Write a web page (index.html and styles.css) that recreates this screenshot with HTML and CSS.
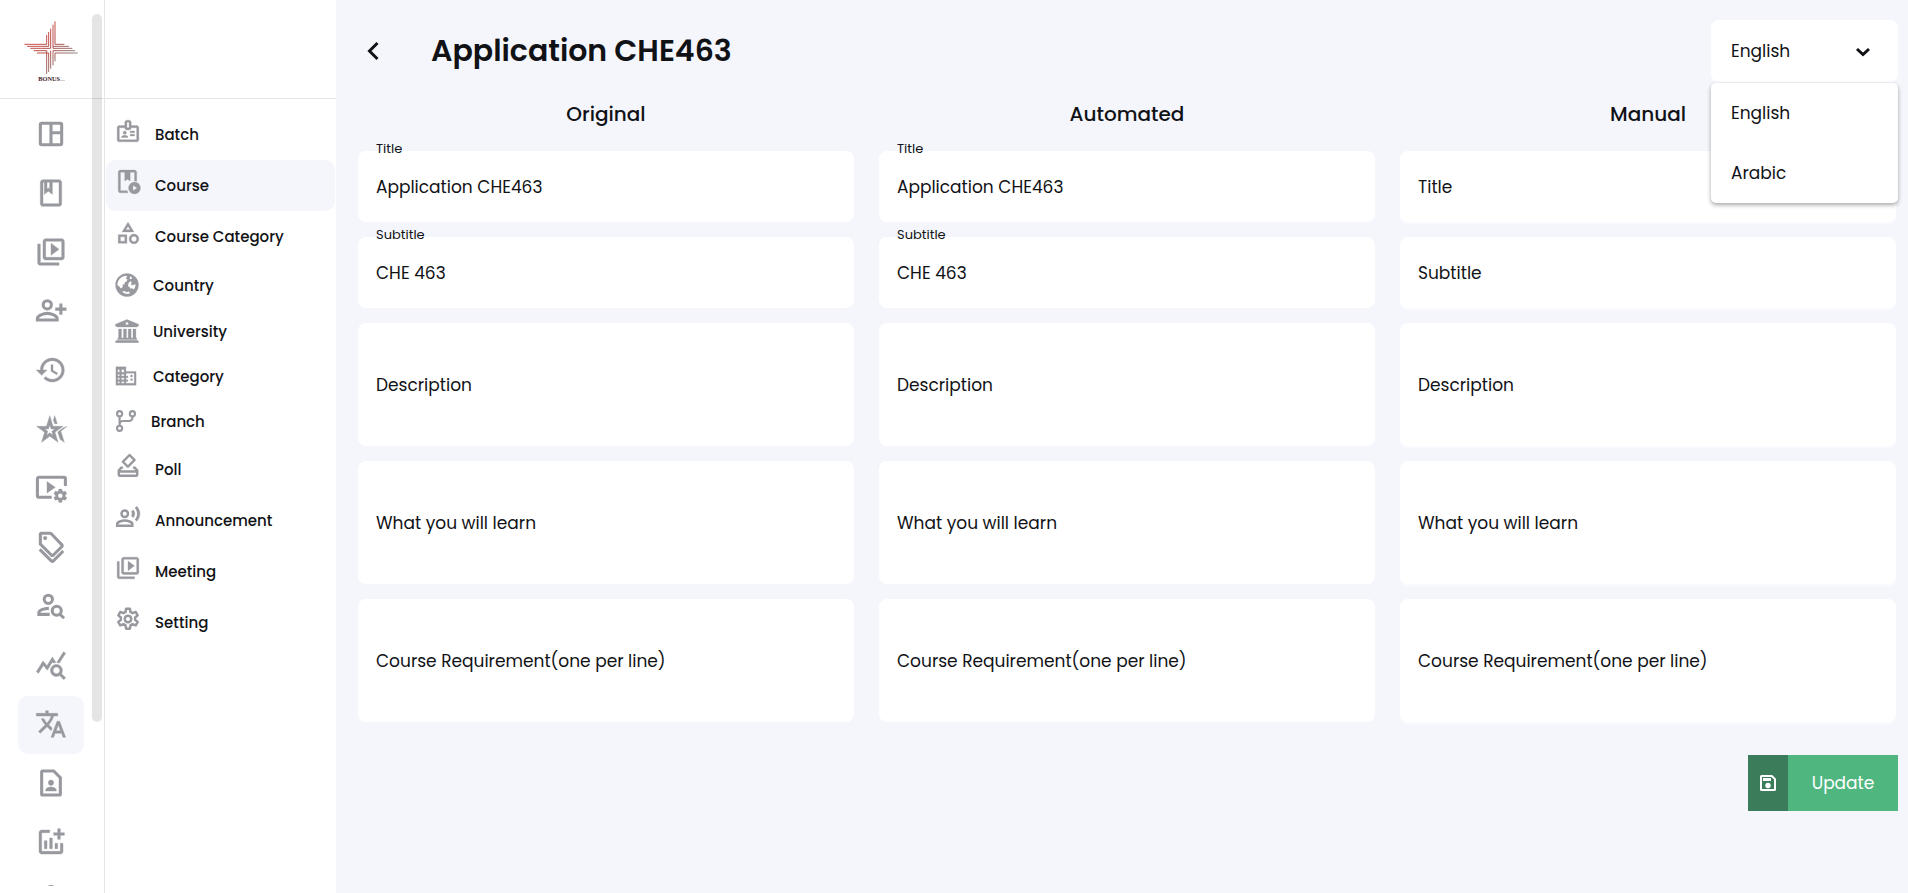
FILE: index.html
```html
<!DOCTYPE html>
<html lang="en">
<head>
    <meta charset="UTF-8">
    <meta name="viewport" content="width=device-width, initial-scale=1.0">
    <title>Application CHE463</title>
    <link rel="stylesheet" href="styles.css">
</head>
<body>
    <!-- Icon rail -->
    <aside class="rail">
        <a href="#" class="logo" aria-label="Bonus">
            <svg width="56" height="64" viewBox="0 0 168 192">
                <defs>
                    <linearGradient id="logoRed" gradientUnits="userSpaceOnUse" x1="20" y1="20" x2="140" y2="130">
                        <stop offset="0" stop-color="#e0524e"/>
                        <stop offset="0.55" stop-color="#b54f4a"/>
                        <stop offset="1" stop-color="#8d8583"/>
                    </linearGradient>
                </defs>
                <g fill="none" stroke="url(#logoRed)" stroke-width="3">
                    <path d="M71 51V79H4M77 42V85H12M83 32V91H22"/>
                    <path d="M90 20V91H148M96 10V79H124M90 85H138"/>
                    <path d="M71 168V98H32M77 162V105H42M83 152V98"/>
                    <path d="M90 142V98H156M96 130V105H164"/>
                </g>
                <text class="logo-text" x="46" y="189">BONUS<tspan class="logo-dots">...</tspan></text>
            </svg>
        </a>
        <nav class="rail-nav" aria-label="Main">
            <a href="#" class="rail-link" aria-label="Dashboard">
                <svg viewBox="0 0 24 24"><path class="line" d="M5 4h14a1 1 0 0 1 1 1v14a1 1 0 0 1-1 1H5a1 1 0 0 1-1-1V5a1 1 0 0 1 1-1zM12 4v16M12 11h8"/></svg>
            </a>
            <a href="#" class="rail-link" aria-label="Book">
                <svg viewBox="0 0 24 24"><path d="M18 2H6c-1.1 0-2 .9-2 2v16c0 1.1.9 2 2 2h12c1.1 0 2-.9 2-2V4c0-1.1-.9-2-2-2zM9 4h2v5l-1-.75L9 9V4zm9 16H6V4h1v9l3-2.25L13 13V4h5v16z"/></svg>
            </a>
            <a href="#" class="rail-link" aria-label="Videos">
                <svg viewBox="0 0 24 24"><path d="M4 6H2v14c0 1.1.9 2 2 2h14v-2H4V6zm16-4H8c-1.1 0-2 .9-2 2v12c0 1.1.9 2 2 2h12c1.1 0 2-.9 2-2V4c0-1.1-.9-2-2-2zm0 14H8V4h12v12zM12 5.5v9l6-4.5z"/></svg>
            </a>
            <a href="#" class="rail-link" aria-label="Add user">
                <svg viewBox="0 0 24 24"><circle class="line" cx="9.2" cy="7.4" r="3.1"/><path class="line" d="M1.8 18.8v-1.2c0-2.2 4.6-3.8 7.4-3.8s7.4 1.6 7.4 3.8v1.2z"/><path class="line" d="M19.4 6.4v8.4M15.2 10.6h8.4"/></svg>
            </a>
            <a href="#" class="rail-link" aria-label="History">
                <svg viewBox="0 0 24 24"><path d="M13 3c-4.97 0-9 4.03-9 9H1l3.89 3.89.07.14L9 12H6c0-3.87 3.13-7 7-7s7 3.13 7 7-3.13 7-7 7c-1.93 0-3.68-.79-4.94-2.06l-1.42 1.42C8.27 19.99 10.51 21 13 21c4.97 0 9-4.03 9-9s-4.03-9-9-9zm-1 5v5l4.28 2.54.72-1.21-3.5-2.08V8H12z"/></svg>
            </a>
            <a href="#" class="rail-link" aria-label="Reviews">
                <svg viewBox="0 0 24 24"><path fill-rule="evenodd" d="M8.6 10H1.2l6 4.4L4.9 22l6.2-4.6 6.2 4.6-2.3-7.6L21 10h-7.5L11.1 2zM11.1 9l1 3h2.8l-2.3 1.7.9 2.9-2.4-1.8-2.4 1.8.9-2.9L7.3 12h2.8z"/><path d="M13.8 5.2 14.8 2l1.9 6h-2zM24 10l-4.6 3.6L22 22l-3.2-2.3-1.7-5.4L21 11.2z"/></svg>
            </a>
            <a href="#" class="rail-link" aria-label="Video settings">
                <svg viewBox="0 0 24 24"><path class="line" d="M12.5 19H2.8a1 1 0 0 1-1-1V5a1 1 0 0 1 1-1h19a1 1 0 0 1 1 1v5.500"/><path d="M9 7.2v8.600l6.2-4.300z"/><path fill-rule="evenodd" transform="translate(13 11.8) scale(.5)" d="M19.43 12.98c.04-.32.07-.64.07-.98s-.03-.66-.07-.98l2.11-1.65c.19-.15.24-.42.12-.64l-2-3.46c-.12-.22-.39-.3-.61-.22l-2.49 1c-.52-.4-1.08-.73-1.69-.98l-.38-2.65C14.46 2.18 14.25 2 14 2h-4c-.25 0-.46.18-.49.42l-.38 2.65c-.61.25-1.17.59-1.69.98l-2.49-1c-.23-.09-.49 0-.61.22l-2 3.46c-.13.22-.07.49.12.64l2.11 1.65c-.04.32-.07.65-.07.98s.03.66.07.98l-2.11 1.65c-.19.15-.24.42-.12.64l2 3.46c.12.22.39.3.61.22l2.49-1c.52.4 1.08.73 1.69.98l.38 2.65c.03.24.24.42.49.42h4c.25 0 .46-.18.49-.42l.38-2.65c.61-.25 1.17-.59 1.69-.98l2.49 1c.23.09.49 0 .61-.22l2-3.46c.12-.22.07-.49-.12-.64zM12 15.5a3.5 3.5 0 1 1 0-7 3.5 3.5 0 0 1 0 7z"/></svg>
            </a>
            <a href="#" class="rail-link" aria-label="Tags">
                <svg viewBox="0 0 24 24"><path class="line" d="M4 2.5v7.3l8.2 8.2a1.2 1.2 0 0 0 1.6 0l6.2-6.2a1.2 1.2 0 0 0 0-1.6L12.2 2.1a1.4 1.4 0 0 0-1-.4H4.8a.8.8 0 0 0-.8.8zM3.5 13.8l8.7 8.6a1.2 1.2 0 0 0 1.6 0l7.4-7.4"/><circle cx="7.6" cy="5.3" r="1.4"/></svg>
            </a>
            <a href="#" class="rail-link" aria-label="Find user">
                <svg viewBox="0 0 24 24"><circle class="line" cx="10" cy="7" r="3.1"/><path class="line" d="M11 18.3H2.9v-1.2c0-1.9 3.5-3.2 7.5-3.3"/><circle class="line" cx="16.3" cy="15.6" r="3.4"/><path class="line" d="M18.6 18l3.2 3.2"/></svg>
            </a>
            <a href="#" class="rail-link" aria-label="Statistics">
                <svg viewBox="0 0 24 24"><path d="M19.88 18.47c.44-.7.7-1.51.7-2.39 0-2.49-2.01-4.5-4.5-4.5s-4.5 2.01-4.5 4.5 2.01 4.5 4.49 4.5c.88 0 1.7-.26 2.39-.7L21.58 23 23 21.58l-3.12-3.11zm-3.8.11c-1.38 0-2.5-1.12-2.5-2.5s1.12-2.5 2.5-2.5 2.5 1.12 2.5 2.5-1.12 2.5-2.5 2.5zm-.36-8.5c-.74.02-1.45.18-2.1.45l-.55-.83-3.8 6.18-3.01-3.52-3.63 5.81L1 17l5-8 3 3.5L13 6l2.72 4.08zm2.59.5c-.64-.28-1.33-.45-2.05-.49L21.38 2 23 3.18l-4.69 7.4z"/></svg>
            </a>
            <a href="#" class="rail-link active" aria-label="Translate">
                <svg viewBox="0 0 24 24"><path d="M12.87 15.07l-2.54-2.51.03-.03c1.74-1.94 2.98-4.17 3.71-6.53H17V4h-7V2H8v2H1v1.99h11.17C11.5 7.92 10.44 9.75 9 11.35 8.07 10.32 7.3 9.19 6.69 8h-2c.73 1.63 1.73 3.17 2.98 4.56l-5.09 5.02L4 19l5-5 3.11 3.11.76-2.04zM18.5 10h-2L12 22h2l1.12-3h4.75L21 22h2l-4.5-12zm-2.62 7l1.62-4.33L19.12 17h-3.24z"/></svg>
            </a>
            <a href="#" class="rail-link" aria-label="Contact page">
                <svg viewBox="0 0 24 24"><path class="line" d="M5.8 3H14l5 5v12.2a.8.8 0 0 1-.8.8H5.8a.8.8 0 0 1-.8-.8V3.8a.8.8 0 0 1 .8-.8z"/><circle cx="12" cy="11.8" r="2"/><path d="M8 18v-.6c0-1.6 2.3-2.4 4-2.4s4 .8 4 2.4v.6z"/></svg>
            </a>
            <a href="#" class="rail-link" aria-label="Add chart">
                <svg viewBox="0 0 24 24"><path d="M22 5v2h-3v3h-2V7h-3V5h3V2h2v3h3zm-3 14H5V5h6V3H5c-1.1 0-2 .9-2 2v14c0 1.1.9 2 2 2h14c1.1 0 2-.9 2-2v-6h-2v6zm-4-6v4h2v-4h-2zm-4 4h2V9h-2v8zm-2 0v-6H7v6h2z"/></svg>
            </a>
            <a href="#" class="rail-link" aria-label="Profile">
                <svg viewBox="0 0 24 24"><circle class="line" cx="12" cy="5.2" r="4"/></svg>
            </a>
        </nav>
        <div class="rail-scroll"></div>
    </aside>

    <!-- Submenu -->
    <aside class="submenu">
        <div class="submenu-head"></div>
        <nav class="submenu-nav" aria-label="Translate">
            <a href="#" class="sub-link">
                <svg viewBox="0 0 24 24"><path fill-rule="evenodd" d="M20 7h-5V4c0-1.1-.9-2-2-2h-2c-1.1 0-2 .9-2 2v3H4c-1.1 0-2 .9-2 2v11c0 1.1.9 2 2 2h16c1.1 0 2-.9 2-2V9c0-1.1-.9-2-2-2zm-9-3h2v5h-2V4zm9 16H4V9h5c0 1.1.9 2 2 2h2c1.1 0 2-.9 2-2h5v11z"/><circle cx="9" cy="13.5" r="1.5"/><path d="M6 18v-.4c0-1.2 2-1.7 3-1.7s3 .5 3 1.7v.4zM14 12h4v1.5h-4zM14 15h4v1.5h-4z"/></svg>
                Batch
            </a>
            <a href="#" class="sub-link active">
                <svg viewBox="0 0 24 24"><path d="M12 22H5c-1.1 0-2-.9-2-2V3c0-1.1.9-2 2-2h13c1.1 0 2 .9 2 2v8.3c-.7-.2-1.3-.3-2-.3V3h-4v8l-2.5-1.5L9 11V3H5v17h6.300c.1.7.4 1.4.7 2z"/><path fill-rule="evenodd" d="M18 12a5.500 5.500 0 1 0 0 11 5.500 5.500 0 0 0 0-11zM16.6 20v-5l3.900 2.500z"/></svg>
                Course
            </a>
            <a href="#" class="sub-link">
                <svg viewBox="0 0 24 24"><path d="M12 2l-5.5 9h11L12 2zm0 3.84L13.93 9h-3.87L12 5.84zM17.5 13c-2.49 0-4.5 2.01-4.5 4.5s2.01 4.5 4.5 4.5 4.5-2.01 4.5-4.5-2.01-4.5-4.5-4.5zm0 7c-1.38 0-2.5-1.12-2.5-2.5s1.12-2.5 2.5-2.5 2.5 1.12 2.5 2.5-1.12 2.5-2.5 2.5zM3 21.5h8v-8H3v8zm2-6h4v4H5v-4z"/></svg>
                Course Category
            </a>
            <a href="#" class="sub-link compact">
                <svg viewBox="0 0 24 24"><circle cx="12" cy="12" r="11.5"/><path class="land" d="M2.4 12.2c0-4.6 3.400-8.600 8-9.400l2 .8-1.800 2 1.800.6-.8 2.200-2 .8.2 2-2.300.4.4 2.200-2 1.600-1.800-2.100zM15 3.500l2 .8-.6 1.800-1.600.2zM13.800 9.500l2-1.200 1 1.500-1 1.600 2 .8 2.600-1.300c.2 2-.4 4-1.500 5.500l-1.600-1.200-1.700.5-1.300-1.900-1.400-.6zM7 18.800l2.600-.8 1.700 1.200 2.500-.6 1.300 1.700c-2.900 1.100-5.800.400-8.100-1.500z"/></svg>
                Country
            </a>
            <a href="#" class="sub-link compact">
                <svg viewBox="0 0 24 24"><path fill-rule="evenodd" d="M12 .6 23.5 5.2v2h-1.300v.8H1.8v-.8H.5v-2zM12 2.900a1.500 1.500 0 1 0 0 3 1.500 1.500 0 0 0 0-3z"/><path d="M3.600 10h2.900v9H8.500v-9h2.900v9h1.800v-9h2.900v9H18v-9h2.900v9h.8v1.500H2.800V19h.8zM1.800 21.200h20.400l1.300 1v1.600H.5v-1.600z"/></svg>
                University
            </a>
            <a href="#" class="sub-link small">
                <svg viewBox="0 0 24 24"><path fill-rule="evenodd" d="M12 7V2H1v20h22V7zM5 20H3v-2h2zm0-4H3v-2h2zm0-4H3v-2h2zm0-4H3V5h2zm5 12H7v-2h3zm0-4H7v-2h3zm0-4H7v-2h3zm0-4H7V5h3zm11 12h-9v-2h2v-2h-2v-2h2v-2h-2V9h9zm-2-9h-2v2h2zm0 4h-2v2h2z"/></svg>
                Category
            </a>
            <a href="#" class="sub-link small branch">
                <svg viewBox="0 0 22 24"><g class="line"><circle cx="4" cy="4" r="2.8"/><circle cx="4" cy="20" r="2.8"/><circle cx="18" cy="4" r="2.8"/><path d="M4 7v10M18 7v1.500a3.500 3.500 0 0 1-3.500 3.500H7.500A3.500 3.500 0 0 0 4 15.500"/></g></svg>
                Branch
            </a>
            <a href="#" class="sub-link">
                <svg viewBox="0 0 24 24"><path fill-rule="evenodd" d="M12.7 1.200 6.600 7.400a1 1 0 0 0 0 1.400l4.600 4.500a1 1 0 0 0 1.400 0l6.200-6.200a1 1 0 0 0 0-1.400l-4.700-4.500a1 1 0 0 0-1.400 0zM13.400 3.300l3.200 3.100-4.700 4.800-3.200-3.100z"/><path class="line" d="M7.500 13.500H5.800L3.500 16.200V20a1 1 0 0 0 1 1h15a1 1 0 0 0 1-1v-3.800l-2.300-2.700h-1.700M3.500 17h17"/></svg>
                Poll
            </a>
            <a href="#" class="sub-link">
                <svg viewBox="0 0 24 24"><circle class="line" cx="9" cy="9" r="3"/><path class="line" d="M2 20v-1.500c0-2 4.500-3.200 7-3.200s7 1.200 7 3.200V20z"/><path d="M16.76 5.36l-1.68 1.69c.84 1.18.84 2.71 0 3.89l1.68 1.69c2.02-2.02 2.02-5.07 0-7.27zM20.07 2l-1.63 1.63c2.77 3.02 2.77 7.56 0 10.74L20.07 16c3.9-3.89 3.91-9.95 0-14z"/></svg>
                Announcement
            </a>
            <a href="#" class="sub-link">
                <svg viewBox="0 0 24 24"><path d="M4 6H2v14c0 1.1.9 2 2 2h14v-2H4V6zm16-4H8c-1.1 0-2 .9-2 2v12c0 1.1.9 2 2 2h12c1.1 0 2-.9 2-2V4c0-1.1-.9-2-2-2zm0 14H8V4h12v12zM12 5.5v9l6-4.5z"/></svg>
                Meeting
            </a>
            <a href="#" class="sub-link">
                <svg viewBox="0 0 24 24"><path class="line" stroke-linejoin="round" d="M10.2 2.500h3.600l.5 3 1.900 1.100 2.900-1.100 1.800 3.100-2.300 2v2.200l2.300 2-1.800 3.100-2.900-1.100-1.900 1.100-.5 3h-3.600l-.5-3-1.900-1.100-2.900 1.100-1.800-3.100 2.300-2v-2.200l-2.300-2 1.800-3.100 2.900 1.100 1.900-1.100z"/><circle class="line" cx="12" cy="12" r="3"/></svg>
                Setting
            </a>
        </nav>
    </aside>

    <main class="content">
        <header class="topbar">
            <button type="button" class="back" aria-label="Back">
                <svg width="14" height="20" viewBox="0 0 14 20"><path d="M11.5 2 3.5 10l8 8"/></svg>
            </button>
            <h1>Application CHE463</h1>
            <div class="language">
                <select id="language" aria-label="Language">
                    <option selected>English</option>
                    <option>Arabic</option>
                </select>
                <svg class="caret" width="16" height="10" viewBox="0 0 16 10"><path d="M2 2l6 5.500L14 2"/></svg>
                <div class="language-menu">
                    <button type="button">English</button>
                    <button type="button">Arabic</button>
                </div>
            </div>
        </header>

        <form class="translations">
            <div class="columns">
                <section class="column">
                    <h2>Original</h2>
                    <div class="field">
                        <input type="text" id="original-title" placeholder=" " value="Application CHE463">
                        <label for="original-title">Title</label>
                    </div>
                    <div class="field">
                        <input type="text" id="original-subtitle" placeholder=" " value="CHE 463">
                        <label for="original-subtitle">Subtitle</label>
                    </div>
                    <div class="field">
                        <textarea id="original-description" placeholder=" "></textarea>
                        <label for="original-description">Description</label>
                    </div>
                    <div class="field">
                        <textarea id="original-learn" placeholder=" "></textarea>
                        <label for="original-learn">What you will learn</label>
                    </div>
                    <div class="field">
                        <textarea id="original-requirement" placeholder=" "></textarea>
                        <label for="original-requirement">Course Requirement(one per line)</label>
                    </div>
                </section>

                <section class="column">
                    <h2>Automated</h2>
                    <div class="field">
                        <input type="text" id="automated-title" placeholder=" " value="Application CHE463">
                        <label for="automated-title">Title</label>
                    </div>
                    <div class="field">
                        <input type="text" id="automated-subtitle" placeholder=" " value="CHE 463">
                        <label for="automated-subtitle">Subtitle</label>
                    </div>
                    <div class="field">
                        <textarea id="automated-description" placeholder=" "></textarea>
                        <label for="automated-description">Description</label>
                    </div>
                    <div class="field">
                        <textarea id="automated-learn" placeholder=" "></textarea>
                        <label for="automated-learn">What you will learn</label>
                    </div>
                    <div class="field">
                        <textarea id="automated-requirement" placeholder=" "></textarea>
                        <label for="automated-requirement">Course Requirement(one per line)</label>
                    </div>
                </section>

                <section class="column manual">
                    <h2>Manual</h2>
                    <div class="field">
                        <input type="text" id="manual-title" placeholder=" ">
                        <label for="manual-title">Title</label>
                    </div>
                    <div class="field">
                        <input type="text" id="manual-subtitle" placeholder=" ">
                        <label for="manual-subtitle">Subtitle</label>
                    </div>
                    <div class="field">
                        <textarea id="manual-description" placeholder=" "></textarea>
                        <label for="manual-description">Description</label>
                    </div>
                    <div class="field">
                        <textarea id="manual-learn" placeholder=" "></textarea>
                        <label for="manual-learn">What you will learn</label>
                    </div>
                    <div class="field">
                        <textarea id="manual-requirement" placeholder=" "></textarea>
                        <label for="manual-requirement">Course Requirement(one per line)</label>
                    </div>
                </section>
            </div>

            <button type="submit" class="update">
                <span class="update-icon">
                    <svg width="16" height="16" viewBox="0 0 16 16"><path fill-rule="evenodd" d="M1.5 0h10.700L16 3.800v10.700a1.500 1.500 0 0 1-1.500 1.500h-13A1.500 1.500 0 0 1 0 14.500v-13A1.500 1.500 0 0 1 1.500 0zM2 2v12h12V4.600L11.400 2zM3 3h8v3H3z"/><circle cx="8" cy="10.500" r="2.700"/></svg>
                </span>
                <span class="update-text">Update</span>
            </button>
        </form>
    </main>
</body>
</html>
```
FILE: styles.css
```css
* {
    box-sizing: border-box;
}

body {
    font-family: Poppins, Inter, sans-serif;
    font-size: 17px;
    background-color: #f4f6fc;
    color: #111216;
    display: flex;
    height: 100vh;
    margin: 0;
    overflow: hidden;
}

button,
input,
select,
textarea {
    font: inherit;
    color: inherit;
    border: none;
    outline: none;
}

button {
    cursor: pointer;
}

/* Icon rail */
.rail {
    position: relative;
    flex: 0 0 105px;
    display: flex;
    flex-direction: column;
    background-color: #fff;
    border-right: 1px solid #e4e4e8;
    padding-bottom: 7px;
}

.logo {
    flex: 0 0 99px;
    display: flex;
    justify-content: center;
    padding: 18px 2px 0 0;
    border-bottom: 1px solid #e4e4e8;
}

.logo-text {
    font-family: "Liberation Serif", serif;
    font-size: 19px;
    font-weight: bold;
    fill: #3c1a1c;
}

.logo-dots {
    fill: #99908f;
}

.rail-nav {
    flex: 1;
    display: flex;
    flex-direction: column;
    gap: 1px;
    padding: 7px 20px 0 18px;
    overflow: hidden;
}

.rail-link {
    flex: 0 0 58px;
    display: flex;
    justify-content: center;
    padding-top: 12px;
    border-radius: 10px;
}

.rail-link svg {
    width: 32px;
    height: 32px;
}

.rail-link svg,
.sub-link svg {
    fill: #97999f;
    stroke: #97999f;
    stroke-width: 0.3;
}

.rail-link.active,
.sub-link.active {
    background-color: #f4f6fc;
}

svg .line {
    fill: none;
    stroke-width: 2.3;
}

svg .land {
    fill: #fff;
    stroke: none;
}

.rail-scroll {
    position: absolute;
    top: 14px;
    right: 2px;
    width: 10px;
    height: 708px;
    border-radius: 5px;
    background-color: rgba(0, 0, 0, 0.1);
}

/* Submenu */
.submenu {
    flex: 0 0 231px;
    background-color: #fff;
}

.submenu-head {
    height: 99px;
    border-bottom: 1px solid #e4e4e8;
}

.submenu-nav {
    padding: 10px 1px 0 1px;
}

.sub-link {
    display: flex;
    align-items: center;
    gap: 14px;
    height: 51px;
    padding-left: 9px;
    border-radius: 10px;
    color: #111216;
    font-size: 15px;
    font-weight: 500;
    text-decoration: none;
}

.sub-link svg {
    width: 26px;
    height: 26px;
    margin-bottom: 8px;
}

.sub-link.compact {
    height: 46px;
}

.sub-link.compact svg {
    width: 24px;
    height: 24px;
    margin-bottom: 0;
}

.sub-link.small {
    height: 45px;
    gap: 16px;
}

.sub-link.small svg {
    width: 22px;
    height: 22px;
    margin-bottom: 2px;
}

.sub-link.branch {
    gap: 14px;
}

/* Content */
.content {
    flex: 1;
    min-width: 0;
    padding: 19px 10px 0 22px;
}

.topbar {
    display: flex;
    align-items: center;
    height: 64px;
}

.back {
    display: flex;
    padding: 8px;
    background: none;
}

.back path,
.caret path {
    fill: none;
    stroke: #111216;
    stroke-width: 3;
}

h1 {
    flex: 1;
    margin: 0 0 0 43px;
    font-size: 30px;
    font-weight: 600;
}

.language {
    position: relative;
    width: 187px;
}

.language select {
    display: block;
    width: 100%;
    height: 62px;
    padding: 0 20px;
    border-radius: 8px;
    background-color: #fff;
    appearance: none;
}

.caret {
    position: absolute;
    top: 27px;
    right: 27px;
    pointer-events: none;
}

.language-menu {
    position: absolute;
    top: 63px;
    left: 0;
    right: 0;
    z-index: 2;
    border-radius: 5px;
    background-color: #fff;
    box-shadow: 0 2px 4px rgba(0, 0, 0, 0.35);
}

.language-menu button {
    display: block;
    width: 100%;
    height: 60px;
    padding: 0 20px;
    background: none;
    text-align: left;
}

.columns {
    display: grid;
    grid-template-columns: repeat(3, 1fr);
    gap: 25px;
    padding-right: 2px;
}

.column {
    display: flex;
    flex-direction: column;
    gap: 15px;
}

h2 {
    margin: 0;
    padding-top: 16px;
    font-size: 20px;
    font-weight: 500;
    line-height: 30px;
    height: 53px;
    text-align: center;
}

.field {
    position: relative;
}

.field input,
.field textarea {
    display: block;
    width: 100%;
    padding: 0 18px;
    border-radius: 8px;
    background-color: #fff;
}

.field input {
    height: 71px;
}

.field textarea {
    height: 123px;
    padding: 48px 18px;
    resize: none;
}

.manual .field input,
.manual .field textarea {
    box-shadow: 0 2px 2px #fafbfe;
}

/* The label sits inside an empty field and moves to the top edge once it is filled */
.field label {
    position: absolute;
    top: 50%;
    left: 18px;
    transform: translateY(-50%);
    line-height: 25px;
    pointer-events: none;
}

.field input:not(:placeholder-shown) + label,
.field textarea:not(:placeholder-shown) + label {
    top: -2px;
    font-size: 13px;
    line-height: 18px;
}

.update {
    display: flex;
    width: 150px;
    height: 56px;
    margin: 33px 0 0 auto;
    padding: 0;
    background-color: #50b67f;
    color: #fff;
}

.update-icon {
    display: flex;
    align-items: center;
    justify-content: center;
    width: 40px;
    height: 56px;
    background-color: #3b7d5b;
}

.update-icon svg {
    fill: #fff;
}

.update-text {
    flex: 1;
    line-height: 56px;
}
```
